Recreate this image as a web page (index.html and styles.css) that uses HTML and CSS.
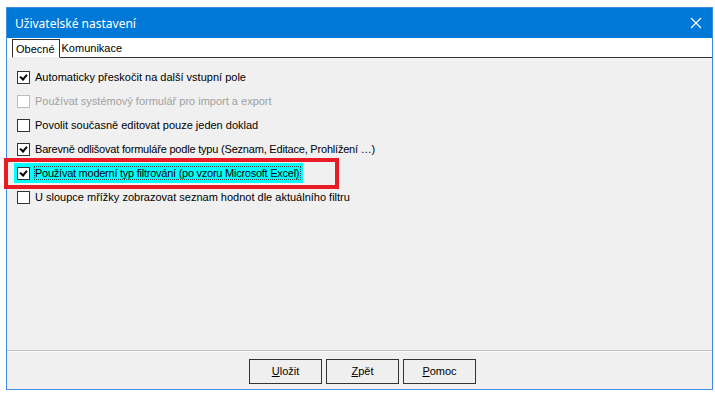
FILE: index.html
```html
<!DOCTYPE html>
<html lang="cs">
<head>
  <meta charset="UTF-8">
  <title>Uživatelské nastavení</title>
  <link rel="stylesheet" href="styles.css">
</head>
<body>
  <div class="window">
    <div class="titlebar">
      <span class="title">Uživatelské nastavení</span>
      <svg class="close" width="12" height="12" viewBox="0 0 12 12">
        <path d="M1 1 L11 11 M11 1 L1 11" stroke="#fff" stroke-width="1.2" fill="none"/>
      </svg>
    </div>

    <div class="tabs">
      <div class="tab active">Obecné</div>
      <div class="tab">Komunikace</div>
      <div class="tab-rest"></div>
    </div>

    <div class="content">
      <div class="row">
        <span class="box checked"></span>
        <span class="label">Automaticky přeskočit na další vstupní pole</span>
      </div>
      <div class="row disabled">
        <span class="box"></span>
        <span class="label">Používat systémový formulář pro import a export</span>
      </div>
      <div class="row">
        <span class="box"></span>
        <span class="label">Povolit současně editovat pouze jeden doklad</span>
      </div>
      <div class="row">
        <span class="box checked"></span>
        <span class="label tight">Barevně odlišovat formuláře podle typu (Seznam, Editace, Prohlížení …)</span>
      </div>
      <div class="row marked">
        <div class="selected">
          <span class="box checked"></span>
          <span class="label focus">Používat moderní typ filtrování (po vzoru Microsoft Excel)</span>
        </div>
      </div>
      <div class="row">
        <span class="box"></span>
        <span class="label">U sloupce mřížky zobrazovat seznam hodnot dle aktuálního filtru</span>
      </div>
    </div>

    <div class="footer">
      <button><u>U</u>ložit</button>
      <button><u>Z</u>pět</button>
      <button><u>P</u>omoc</button>
    </div>
  </div>
</body>
</html>
```

FILE: styles.css
```css
body {
  margin: 0;
  background: #fff;
  font-family: Tahoma, "Liberation Sans", Arial, sans-serif;
  font-size: 11px;
  color: #000;
}

.window {
  margin: 7px 0 0 6px;
  width: 705px;
  height: 381px;
  border: 1px solid #3b8fde;
  background: #f0f0f0;
  display: flex;
  flex-direction: column;
}

.titlebar {
  height: 30px;
  background: #0078d7;
  display: flex;
  align-items: center;
  justify-content: space-between;
  padding: 0 10px 0 8px;
  flex-shrink: 0;
}

.title {
  color: #fff;
  font-family: "Noto Sans", "Open Sans", sans-serif;
  font-size: 12px;
}

.tabs {
  height: 20px;
  background: #fff;
  display: flex;
  align-items: flex-end;
  padding-left: 5px;
  flex-shrink: 0;
}

.tab {
  height: 18px;
  line-height: 19px;
  padding: 0 3px 0 2px;
  border-bottom: 1px solid #333;
}

.tab.active {
  border: 1px solid #333;
  border-bottom: 1px solid #f0f0f0;
  padding: 0 4px 0 3px;
  height: 17px;
}

.tab-rest {
  flex: 1;
  border-bottom: 1px solid #333;
  height: 19px;
}

.content {
  flex: 1;
  padding-top: 7px;
  border-bottom: 1px solid #c4c4c4;
  box-shadow: 0 1px 0 #fafafa;
}

.row {
  height: 24px;
  display: flex;
  align-items: center;
  padding-left: 10px;
  white-space: nowrap;
}

.box {
  width: 11px;
  height: 11px;
  border: 1px solid #333;
  background: #fff;
  margin-right: 5px;
  position: relative;
  flex-shrink: 0;
}

.box.checked::after {
  content: "";
  position: absolute;
  left: 3px;
  top: 1px;
  width: 3px;
  height: 5px;
  border: solid #000;
  border-width: 0 2px 2px 0;
  transform: rotate(40deg);
}

.disabled .box {
  border-color: #bcbcbc;
}

.disabled .label {
  color: #a0a0a0;
}

.label.tight {
  letter-spacing: -0.2px;
}

.row.marked {
  padding-left: 7px;
  position: relative;
}

.row.marked::after {
  content: "";
  position: absolute;
  left: -3px;
  top: -3px;
  width: 327px;
  height: 23px;
  border: 4px solid #e81c24;
}

.selected {
  display: flex;
  align-items: center;
  height: 20px;
  padding: 0 3px 0 3px;
  background: #00ffff;
}

.label.focus {
  outline: 1px dotted #444;
  outline-offset: 0;
  padding-right: 1px;
  letter-spacing: -0.25px;
}

.footer {
  height: 38px;
  display: flex;
  justify-content: center;
  align-items: center;
  gap: 4px;
  flex-shrink: 0;
  padding-left: 6px;
  padding-top: 2px;
  box-sizing: border-box;
}

button {
  width: 73px;
  height: 25px;
  border: 1px solid #333;
  background: #efefef;
  font-family: inherit;
  font-size: 11px;
  font-weight: normal;
  color: #000;
  padding: 0;
}
```
